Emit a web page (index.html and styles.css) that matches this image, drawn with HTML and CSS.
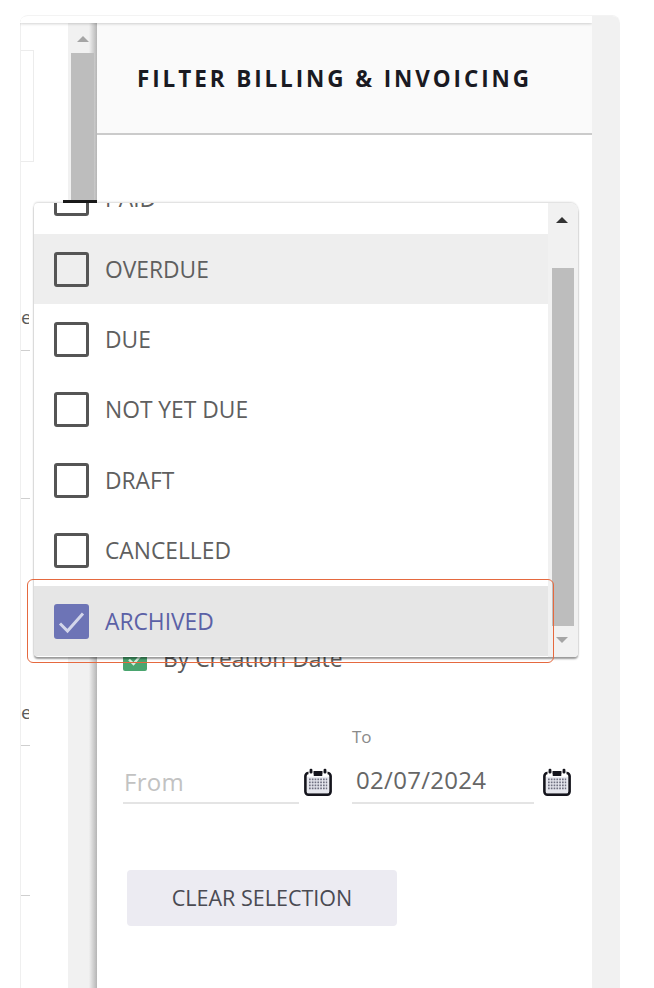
FILE: index.html
```html
<!DOCTYPE html>
<html lang="en">
<head>
<meta charset="utf-8">
<title>Filter Billing &amp; Invoicing</title>
<link rel="stylesheet" href="styles.css">
</head>
<body>
<svg class="defs" width="0" height="0" aria-hidden="true">
  <symbol id="cal" viewBox="0 0 28 28">
    <rect x="1.4" y="5" width="25.2" height="21.6" rx="3" fill="#fff" stroke="#14141c" stroke-width="2.6"/>
    <rect x="9.5" y="3" width="9" height="5" fill="#14141c"/>
    <rect x="4.5" y="3.5" width="5" height="5" fill="#fff"/>
    <rect x="18.5" y="3.5" width="5" height="5" fill="#fff"/>
    <rect x="5.6" y="0.8" width="2.8" height="4.6" rx="1.2" fill="#14141c"/>
    <rect x="19.6" y="0.8" width="2.8" height="4.6" rx="1.2" fill="#14141c"/>
    <rect x="3" y="8.8" width="22" height="16.4" fill="#e6e7ee"/>
    <g stroke="#6f7080" stroke-width="1.7" stroke-dasharray="1.7 1.1">
      <path d="M5 11.4H23.2"/>
      <path d="M5 14.4H23.2"/>
      <path d="M5 17.4H23.2"/>
      <path d="M5 20.4H23.2"/>
    </g>
  </symbol>
</svg>
<div class="window">
  <div class="topstrip"></div>
  <div class="columns">
    <aside class="backdrop">
      <div class="backdrop-box"></div>
      <div class="frag frag-a">e</div>
      <div class="rule rule-a"></div>
      <div class="rule rule-b"></div>
      <div class="frag frag-b">e</div>
      <div class="rule rule-c"></div>
      <div class="rule rule-d"></div>
    </aside>
    <div class="page-scroll">
      <span class="arrow-up page-arrow"></span>
      <div class="page-thumb"></div>
    </div>
    <main class="panel">
      <header class="panel-head">
        <h1 class="panel-title">FILTER BILLING &amp; INVOICING</h1>
      </header>
      <div class="panel-body">
        <label class="creation">
          <span class="green-check">
            <svg viewBox="0 0 24 24" width="24" height="24"><path d="M6 12.5l4.5 4.5L18 8" fill="none" stroke="#d9efe0" stroke-width="2.4"/></svg>
          </span>
          <span>By Creation Date</span>
        </label>
        <div class="dates">
          <div class="date-col">
            <div class="date-label">&nbsp;</div>
            <div class="date-row">
              <div class="date-input date-from"><span class="placeholder">From</span></div>
              <svg class="cal" width="28" height="28"><use href="#cal"/></svg>
            </div>
          </div>
          <div class="date-col">
            <div class="date-label">To</div>
            <div class="date-row">
              <div class="date-input date-to">02/07/2024</div>
              <svg class="cal" width="28" height="28"><use href="#cal"/></svg>
            </div>
          </div>
        </div>
        <button class="clear-btn" type="button">CLEAR SELECTION</button>
      </div>

      <div class="thumb-end"></div>
      <div class="dropdown">
        <ul class="options">
          <li class="option option-clipped"><span class="box"></span>PAID</li>
          <li class="option option-hover"><span class="box"></span>OVERDUE</li>
          <li class="option"><span class="box"></span>DUE</li>
          <li class="option"><span class="box"></span>NOT YET DUE</li>
          <li class="option"><span class="box"></span>DRAFT</li>
          <li class="option"><span class="box"></span>CANCELLED</li>
          <li class="option option-selected">
            <span class="box box-checked">
              <svg viewBox="0 0 35 35" width="35" height="35"><path d="M6 19.5l7.5 7.5L29 9.5" fill="none" stroke="#d3d6ea" stroke-width="3"/></svg>
            </span>ARCHIVED
          </li>
        </ul>
        <div class="list-scroll">
          <span class="arrow-up list-arrow-up"></span>
          <div class="list-thumb"></div>
          <span class="arrow-down list-arrow-down"></span>
        </div>
      </div>
      <div class="callout"></div>
    </main>
    <div class="gutter"></div>
  </div>
</div>
</body>
</html>
```

FILE: styles.css
```css
* { box-sizing: border-box; }
html, body { margin: 0; height: 100%; overflow: hidden; background: #fff; }
body {
  padding: 15px 0 0 20px;
  font-family: "Open Sans", "Liberation Sans", sans-serif;
  color: #5a5a5a;
}
.defs { position: absolute; }
.window {
  width: 600px;
  height: 973px;
  display: flex;
  flex-direction: column;
  position: relative;
  border-radius: 8px 8px 0 0;
  border-top: 1px solid #f3f3f3;
  overflow: hidden;
}
.topstrip {
  height: 7px;
  flex: none;
  margin-right: 28px;
  background: #fff;
  box-shadow: 0 1px 3px rgba(0,0,0,.18);
  position: relative;
  z-index: 1;
}
.columns { flex: 1; display: flex; min-height: 0; }

/* backdrop page behind the panel */
.backdrop {
  width: 48px;
  flex: none;
  border-left: 1px solid #efefef;
  background: #fff;
  color: #5a5a5a;
  overflow: hidden;
}
.backdrop-box {
  width: 13px;
  height: 112px;
  margin-top: 27px;
  border: 1px solid #ececec;
  border-left: 0;
}
.frag {
  font-size: 19px;
  line-height: 20px;
  width: 8px;
  overflow: hidden;
}
.frag-a { margin-top: 145px; }
.frag-b { margin-top: 203px; }
.rule { height: 1px; width: 9px; background: #cfcfcf; }
.rule-a { margin-top: 23px; }
.rule-b { margin-top: 147px; }
.rule-c { margin-top: 23px; }
.rule-d { margin-top: 149px; }

.page-scroll {
  width: 29px;
  flex: none;
  background: linear-gradient(to right, #f1f1f1 0, #f1f1f1 72%, #b5b5b5 100%);
  position: relative;
  padding: 7px 0 0 3px;
}
.arrow-up, .arrow-down {
  display: block;
  width: 0;
  height: 0;
  border-left: 6.5px solid transparent;
  border-right: 6.5px solid transparent;
}
.arrow-up { border-bottom: 6.5px solid #a5a5a5; }
.arrow-down { border-top: 6.5px solid #a5a5a5; }
.page-arrow { margin: 6px 0 0 6px; }
.page-thumb {
  width: 23px;
  height: 148px;
  margin-top: 11px;
  background: #bdbdbd;
}

.panel { width: 495px; flex: none; position: relative; background: #fff; }
.panel-head {
  height: 112px;
  background: #fafafa;
  border-bottom: 2px solid #cbcbcb;
  padding: 42px 0 0 40px;
}
.panel-title {
  margin: 0;
  font-size: 22.5px;
  line-height: 28px;
  font-weight: 700;
  letter-spacing: 2.9px;
  color: #1a1a22;
  white-space: nowrap;
}
.panel-body { padding: 512px 0 0 26px; }
.creation {
  display: flex;
  align-items: center;
  gap: 16px;
  font-size: 22.9px;
  line-height: 24px;
  color: #5a5a5a;
}
.green-check {
  width: 24px;
  height: 24px;
  border-radius: 2px;
  background: #4aa56f;
  display: block;
}
.green-check svg { display: block; }
.dates { display: flex; margin-top: 55px; }
.date-col { width: 229px; }
.date-label {
  font-size: 17px;
  line-height: 22px;
  color: #8a8a8a;
}
.date-row { display: flex; align-items: flex-start; gap: 5px; margin-top: 11px; }
.date-input {
  height: 45px;
  border-bottom: 2px solid #e4e4e4;
  font-size: 24px;
  line-height: 30px;
  letter-spacing: .3px;
  color: #666;
}
.date-from { width: 176px; padding: 8px 0 0 1px; }
.date-to { width: 182px; padding: 6px 0 0 4px; }
.date-to + .cal { margin-left: 4px; }
.placeholder { color: #c2c2c2; }
.cal { display: block; flex: none; margin-top: 9px; }
.clear-btn {
  display: block;
  width: 270px;
  height: 56px;
  margin: 66px 0 0 4px;
  padding: 0 0 2px;
  border: 0;
  border-radius: 4px;
  background: #ecebf2;
  font-family: inherit;
  font-size: 21.5px;
  color: #4a4a52;
}

/* open dropdown over the panel */
.thumb-end {
  position: absolute;
  left: -34px;
  top: 177px;
  width: 34px;
  height: 3px;
  background: #1c1c1c;
  filter: blur(.5px);
}
.dropdown {
  position: absolute;
  left: -63px;
  top: 180px;
  width: 544px;
  height: 454px;
  display: flex;
  background: #fff;
  border-radius: 4px 8px 4px 4px;
  box-shadow: 0 -1px 2px rgba(0,0,0,.15), 0 2px 2px rgba(0,0,0,.4);
  overflow: hidden;
  z-index: 2;
}
.options {
  list-style: none;
  margin: -39.5px 0 0;
  padding: 0;
  width: 514px;
  flex: none;
}
.option {
  height: 70.4px;
  display: flex;
  align-items: center;
  gap: 16px;
  padding-left: 20px;
  font-size: 22.8px;
  color: #5f5f5f;
}
.box {
  width: 35px;
  height: 35px;
  flex: none;
  border: 3px solid #555;
  border-radius: 3px;
  background: transparent;
}
.option-hover { background: #eeeeee; }
.option-selected { background: #e6e6e6; color: #5b61a6; }
.box-checked { border: 0; background: #6d74b6; }
.box-checked svg { display: block; }
.list-scroll {
  flex: 1;
  background: #f1f1f1;
  padding: 14px 0 0 4px;
  position: relative;
}
.list-arrow-up { margin-left: 4px; border-bottom-color: #333; }
.list-thumb {
  width: 22px;
  height: 358px;
  margin-top: 45px;
  background: #bdbdbd;
}
.list-arrow-down { margin: 11px 0 0 4px; }
.callout {
  position: absolute;
  left: -70px;
  top: 556px;
  width: 527px;
  height: 84px;
  border: 1px solid #e5693f;
  border-radius: 6px;
  z-index: 3;
}
.gutter {
  flex: 1;
  background: #f1f1f1;
  margin-top: -8px;
  border-radius: 0 8px 0 0;
  position: relative;
  z-index: 2;
}
```
